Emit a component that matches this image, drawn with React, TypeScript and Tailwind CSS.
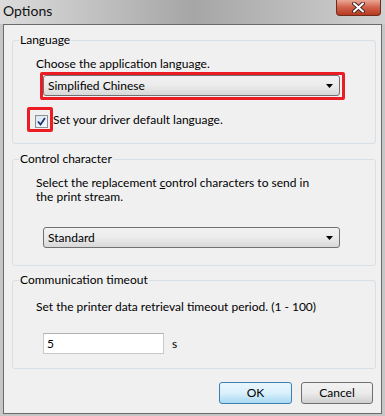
import React from "react"

function ComboBox({ value, width }: { value: string; width: string }) {
  return (
    <div
      className={`${width} flex h-[21px] items-center justify-between rounded-[3px] border border-[#707070] bg-gradient-to-b from-[#f2f2f2] via-[#ebebeb] to-[#d8d8d8] pl-[4px] pr-[6px]`}
    >
      <span>{value}</span>
      <svg width="7" height="4" viewBox="0 0 7 4">
        <path d="M0 0h7L3.5 4z" fill="#000" />
      </svg>
    </div>
  )
}

function GroupBox({ title, height, children }: { title: string; height: string; children: React.ReactNode }) {
  return (
    <div className={`${height} flex w-[364px] flex-col rounded-[3px] border border-[#d5dfe5]`}>
      <span className="-mt-[9px] ml-[6px] h-[16px] w-fit bg-[#f0f0f0] px-[1px] leading-[16px]">{title}</span>
      {children}
    </div>
  )
}

export default function App() {
  return (
    <div className="flex h-[416px] w-[385px] flex-col overflow-hidden bg-[#c6c6c6] font-['Lato',sans-serif] text-[12px] text-black">
      {/* Title bar */}
      <div className="flex h-[24px] shrink-0 items-start justify-between bg-gradient-to-r from-[#dcdcdc] via-[#a6a6a6] to-[#d0d0d0]">
        <span className="pl-[3px] pt-[2px] text-[14px] leading-[17px] text-[#111]">Options</span>
        <div className="mr-[4px] flex h-[16px] w-[45px] items-center justify-center rounded-b-[4px] border border-t-0 border-[#6e2c1f] bg-gradient-to-b from-[#e9a795] via-[#d0604a] to-[#b8391f]">
          <svg width="13" height="11" viewBox="0 0 13 11">
            <path d="M2 1.5l9 8M11 1.5l-9 8" stroke="#4a2a24" strokeWidth="4" strokeLinecap="round" />
            <path d="M2 1.5l9 8M11 1.5l-9 8" stroke="#fff" strokeWidth="2" strokeLinecap="round" />
          </svg>
        </div>
      </div>

      {/* Dialog body */}
      <div className="mx-[3px] flex h-[390px] shrink-0 flex-col border border-[#6a6a6a] bg-[#f0f0f0] pl-[8px] pt-[15px]">
        <GroupBox title="Language" height="h-[104px]">
          <p className="ml-[23px] mt-[8px] leading-[16px]">Choose the application language.</p>
          <div className="ml-[27px] flex h-[28px] w-[305px] rounded-[2px] border-[3px] border-[#ec1c24]">
            <ComboBox value="Simplified Chinese" width="w-[297px]" />
          </div>
          <div className="mt-[7px] flex items-center">
            <div className="ml-[14px] h-[25px] w-[26px] rounded-[2px] border-[3px] border-[#ec1c24] pl-[5px] pt-[5px]">
              <div className="flex h-[13px] w-[13px] items-center justify-center border border-[#8e8f8f] bg-gradient-to-br from-[#dbe6f4] to-[#f4f8fc]">
                <svg width="9" height="9" viewBox="0 0 9 9">
                  <path d="M1 4.5l2.5 3L8 1" stroke="#1f3474" strokeWidth="1.8" fill="none" />
                </svg>
              </div>
            </div>
            <span className="leading-[16px]">Set your driver default language.</span>
          </div>
        </GroupBox>

        <div className="mt-[15px]">
          <GroupBox title="Control character" height="h-[107px]">
            <p className="ml-[23px] mt-[9px] leading-[14px]">
              Select the replacement <span className="underline">c</span>ontrol characters to send in
              <br />
              the print stream.
            </p>
            <div className="ml-[30px] mt-[23px]">
              <ComboBox value="Standard" width="w-[297px]" />
            </div>
          </GroupBox>
        </div>

        <div className="mt-[14px]">
          <GroupBox title="Communication timeout" height="h-[89px]">
            <p className="ml-[23px] mt-[11px] leading-[16px]">Set the printer data retrieval timeout period. (1 - 100)</p>
            <div className="ml-[30px] mt-[18px] flex items-center gap-[8px]">
              <div className="flex h-[21px] w-[121px] items-center border border-[#c9c9c9] border-t-[#b0b0b0] bg-white pl-[3px]">5</div>
              <span>s</span>
            </div>
          </GroupBox>
        </div>

        <div className="mt-[13px] flex justify-end gap-[9px] pr-[8px]">
          <button className="h-[22px] w-[73px] rounded-[3px] border border-[#3c7fb1] bg-gradient-to-b from-[#eaf6fd] via-[#d9f0fc] to-[#a8d8f2]">
            OK
          </button>
          <button className="h-[22px] w-[72px] rounded-[3px] border border-[#707070] bg-gradient-to-b from-[#f2f2f2] via-[#ebebeb] to-[#cfcfcf]">
            Cancel
          </button>
        </div>
      </div>
    </div>
  )
}
